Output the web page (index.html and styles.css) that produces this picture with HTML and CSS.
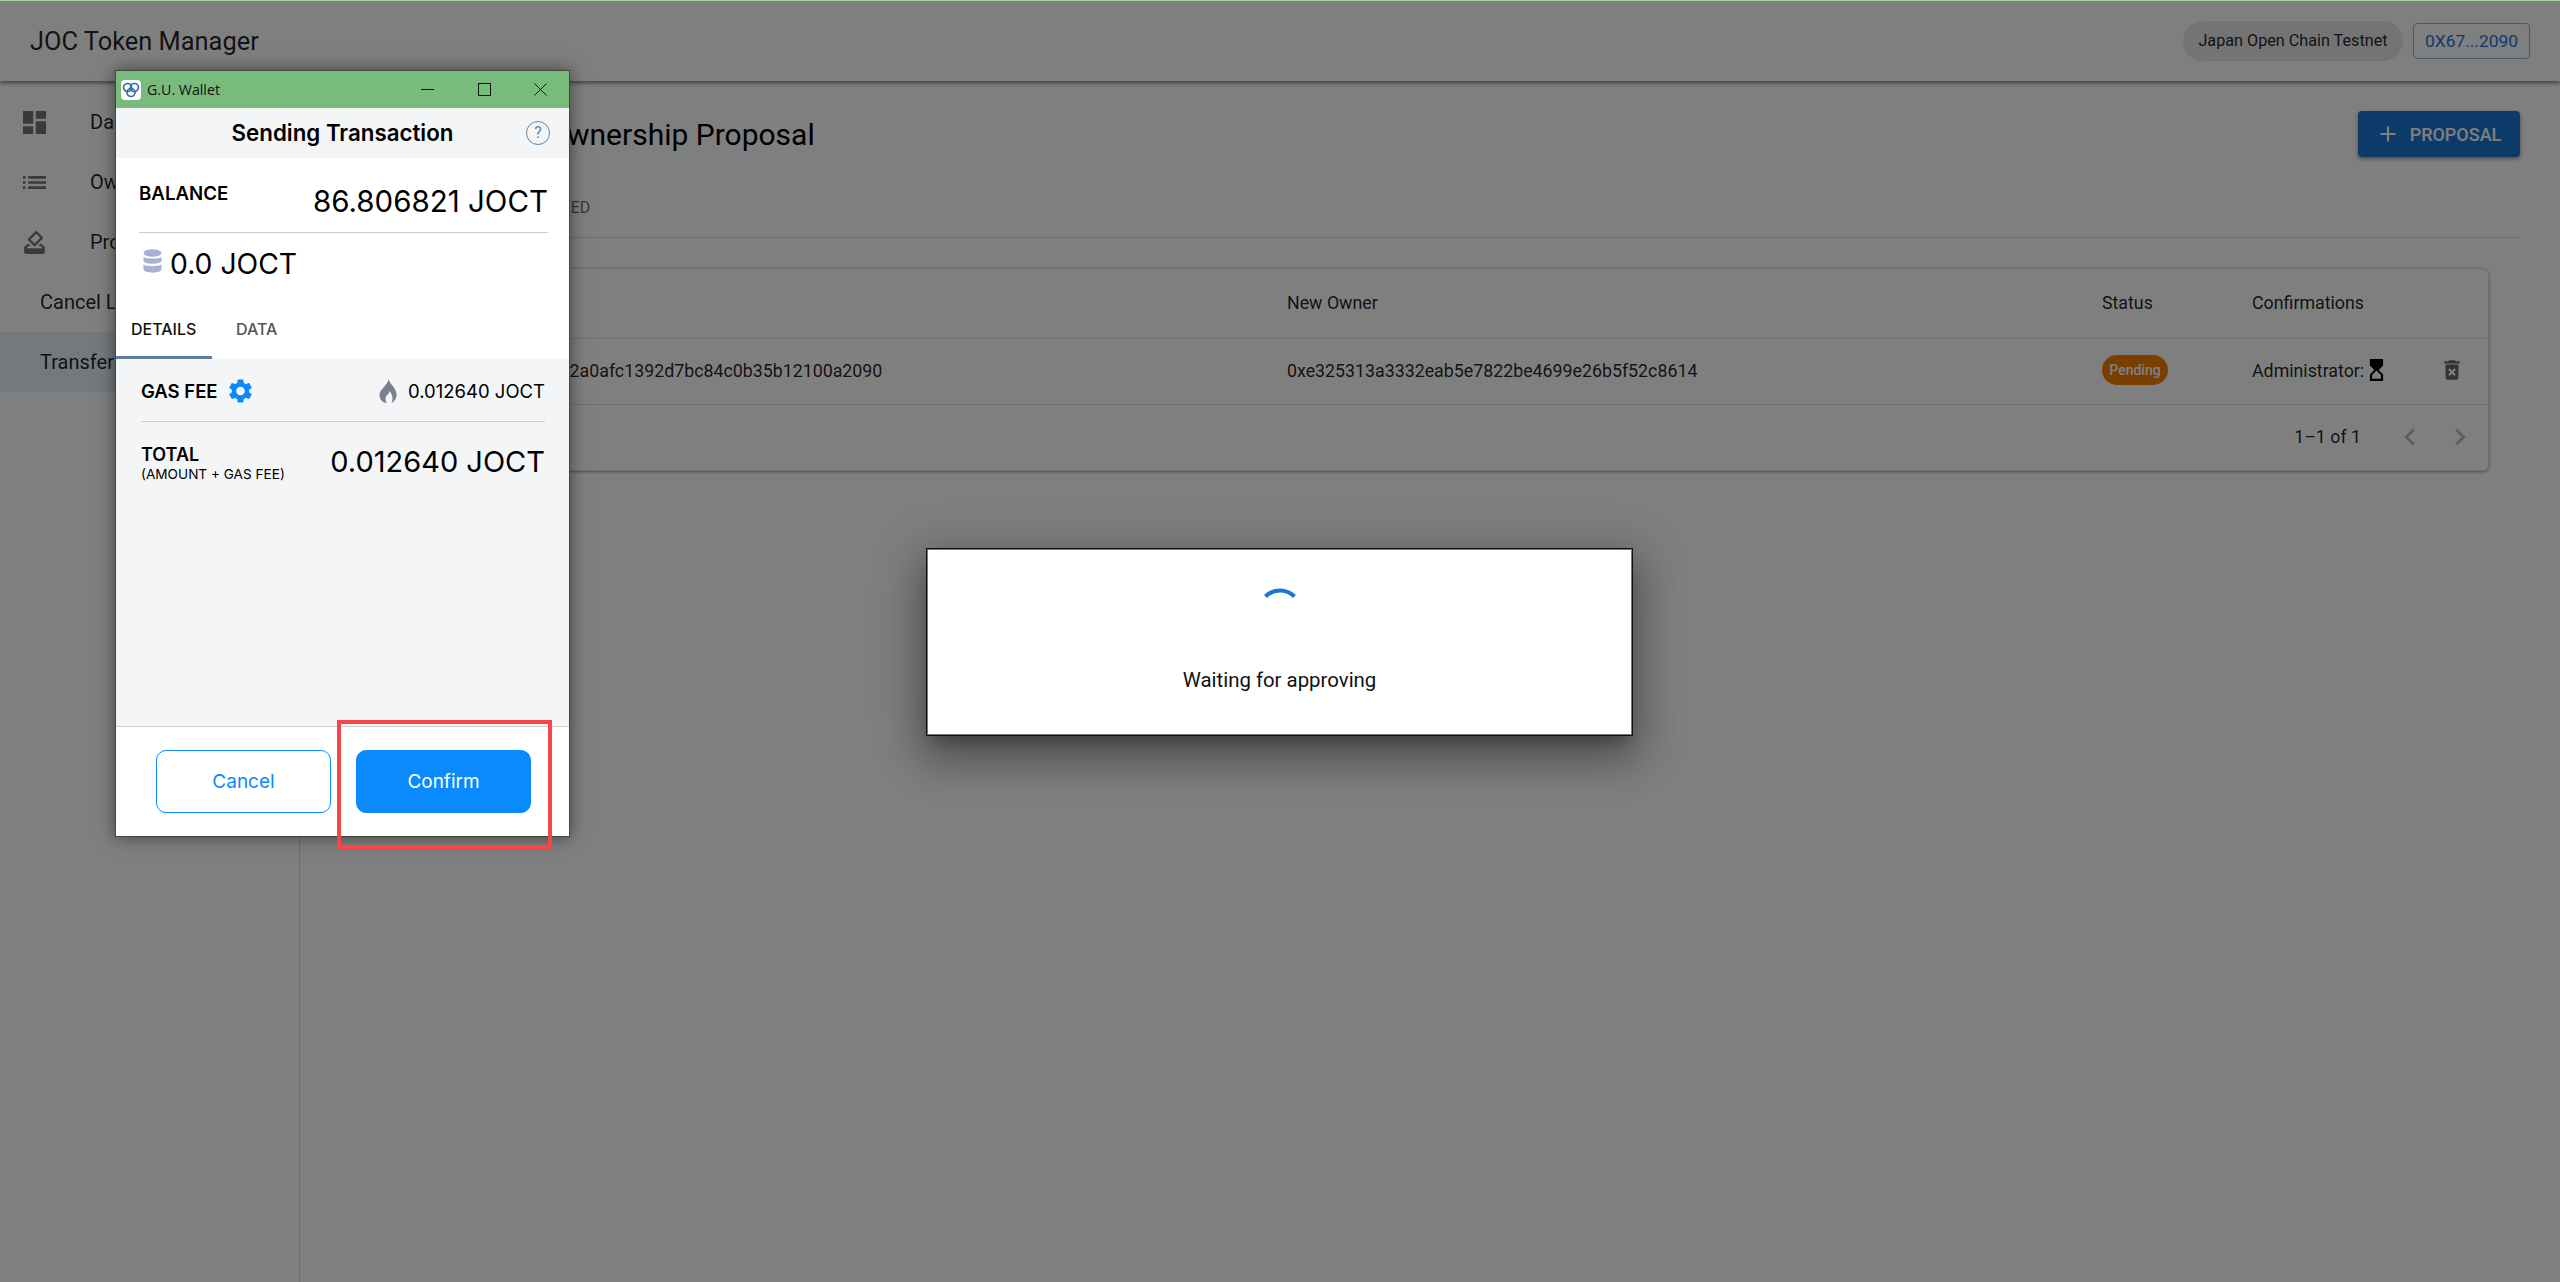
FILE: index.html
```html
<!DOCTYPE html>
<html lang="en">
<head>
<meta charset="utf-8">
<title>JOC Token Manager</title>
<link rel="stylesheet" href="styles.css">
</head>
<body>
<div class="app">
  <header class="appbar">
    <div class="brand">JOC Token Manager</div>
    <div class="appbar-right">
      <span class="network">Japan Open Chain Testnet</span>
      <span class="account">0X67...2090</span>
    </div>
  </header>
  <div class="layout">
    <nav class="sidebar">
      <div class="nav-item"><svg class="nav-icon" viewBox="3 3 18 18"><path d="M3 13h8V3H3v10zm0 8h8v-6H3v6zm10 0h8V11h-8v10zm0-18v6h8V3h-8z"/></svg><span>Dashboard</span></div>
      <div class="nav-item"><svg class="nav-icon" viewBox="3 3 18 18"><path d="M3 13h2v-2H3v2zm0 4h2v-2H3v2zm0-8h2V7H3v2zm4 4h14v-2H7v2zm0 4h14v-2H7v2zM7 7v2h14V7H7z"/></svg><span>Owners</span></div>
      <div class="nav-item"><svg class="nav-icon" viewBox="3 2 18 20"><path d="M18 13h-.68l-2 2h1.91L19 17H5l1.78-2h2.05l-2-2H6l-3 3v4c0 1.1.89 2 1.99 2H19c1.1 0 2-.89 2-2v-4l-3-3zm-1-5.05l-4.95 4.95-3.54-3.54 4.95-4.95L17 7.95zm-4.24-5.66L6.39 8.66c-.39.39-.39 1.02 0 1.41l4.95 4.95c.39.39 1.02.39 1.41 0l6.36-6.36c.39-.39.39-1.02 0-1.41L14.16 2.3c-.38-.4-1.01-.4-1.4-.01z"/></svg><span>Proposals</span></div>
      <div class="nav-item sub">Cancel Lock</div>
      <div class="nav-item sub selected">Transfer Ownership</div>
    </nav>
    <main class="main">
      <div class="page-head">
        <h1 class="page-title">Transfer Ownership Proposal</h1>
        <button class="add-btn"><svg class="add-icon" viewBox="0 0 24 24"><path d="M19 13h-6v6h-2v-6H5v-2h6V5h2v6h6v2z"/></svg>PROPOSAL</button>
      </div>
      <div class="tabs"><span class="tab">PENDING</span><span class="tab">FINISHED</span></div>
      <section class="card">
        <table class="table">
          <thead>
            <tr><th class="c-id"></th><th class="c-addr">Old Owner</th><th class="c-addr">New Owner</th><th class="c-status">Status</th><th class="c-conf">Confirmations</th><th></th></tr>
          </thead>
          <tbody>
            <tr>
              <td></td>
              <td>0x67c4d1e92a0afc1392d7bc84c0b35b12100a2090</td>
              <td>0xe325313a3332eab5e7822be4699e26b5f52c8614</td>
              <td><span class="pending">Pending</span></td>
              <td><span class="conf">Administrator: <svg class="hourglass" viewBox="6 2 12 20"><path d="M6 2l.01 6L10 12l-3.99 4.01L6 22h12v-6l-4-4 4-3.99V2H6zm10 14.5V20H8v-3.51l4-4 4 4.01z"/></svg></span></td>
              <td><svg class="trash" viewBox="0 0 24 24"><path d="M6 19c0 1.1.9 2 2 2h8c1.1 0 2-.9 2-2V7H6v12zm2.46-7.12l1.41-1.41L12 12.59l2.12-2.12 1.41 1.41L13.41 14l2.12 2.12-1.41 1.41L12 15.41l-2.12 2.12-1.41-1.41L10.59 14l-2.13-2.12zM15.5 4l-1-1h-5l-1 1H5v2h14V4z"/></svg></td>
            </tr>
          </tbody>
        </table>
        <div class="pager">
          <span class="pager-text">1–1 of 1</span>
          <svg class="chev" viewBox="0 0 24 24"><path d="M15.41 7.41 14 6l-6 6 6 6 1.41-1.41L10.83 12z"/></svg>
          <svg class="chev" viewBox="0 0 24 24"><path d="M10 6 8.59 7.41 13.17 12l-4.58 4.59L10 18l6-6z"/></svg>
        </div>
      </section>
    </main>
  </div>
  <div class="scrim"></div>
  <div class="topline"></div>

  <div class="modal">
    <svg class="spinner" viewBox="0 0 48 48"><path d="M9.500 10.500 A20.500 20.500 0 0 1 38.500 10.500" fill="none" stroke="#1976d2" stroke-width="4.200"/></svg>
    <div class="modal-text">Waiting for approving</div>
  </div>

  <div class="wallet">
    <div class="titlebar">
      <span class="logo"><svg viewBox="0 0 20 20"><g fill="none" stroke="#3a6ea5" stroke-width="1.700"><circle cx="6.600" cy="7.500" r="4"/><circle cx="13.400" cy="7.500" r="4"/><circle cx="10" cy="12.500" r="4"/></g></svg></span>
      <span class="wallet-name">G.U. Wallet</span>
      <span class="win-controls">
        <svg class="win-btn" viewBox="0 0 13 13"><path d="M0 6.500h13" stroke="#111" fill="none"/></svg>
        <svg class="win-btn" viewBox="0 0 13 13"><rect x=".5" y=".5" width="12" height="12" stroke="#111" fill="none"/></svg>
        <svg class="win-btn" viewBox="0 0 13 13"><path d="M.5.5l12 12M12.500.5l-12 12" stroke="#111" fill="none"/></svg>
      </span>
    </div>
    <div class="wallet-head">
      <span class="wallet-title">Sending Transaction</span>
      <span class="help">?</span>
    </div>
    <div class="summary">
      <div class="balance-row"><span class="balance-label">BALANCE</span><span class="amount">86.806821 JOCT</span></div>
      <div class="value-row">
        <svg class="db" viewBox="0 0 20 26"><g fill="#a8b1d4"><ellipse cx="10" cy="4" rx="9.500" ry="4"/><path d="M.5 8c2 2.600 17 2.600 19 0v4c0 4.600-19 4.600-19 0z"/><path d="M.5 16c2 2.600 17 2.600 19 0v5c0 5-19 5-19 0z"/></g></svg>
        <span class="amount small">0.0 JOCT</span>
      </div>
      <div class="wallet-tabs"><span class="wtab active">DETAILS</span><span class="wtab">DATA</span></div>
    </div>
    <div class="details">
      <div class="fee-row">
        <span class="fee-label">GAS FEE</span>
        <svg class="gear" viewBox="2.500 2 19 20"><path d="M19.14 12.94c.04-.3.06-.61.06-.94 0-.32-.02-.64-.07-.94l2.03-1.58a.49.49 0 0 0 .12-.61l-1.92-3.32a.488.488 0 0 0-.59-.22l-2.39.96c-.5-.38-1.03-.7-1.62-.94l-.36-2.54a.484.484 0 0 0-.48-.41h-3.84c-.24 0-.43.17-.47.41l-.36 2.54c-.59.24-1.13.57-1.62.94l-2.39-.96c-.22-.08-.47 0-.59.22L2.74 8.87c-.12.21-.08.47.12.61l2.03 1.58c-.05.3-.09.63-.09.94s.02.64.07.94l-2.03 1.58a.49.49 0 0 0-.12.61l1.92 3.32c.12.22.37.29.59.22l2.39-.96c.5.38 1.03.7 1.62.94l.36 2.54c.05.24.24.41.48.41h3.84c.24 0 .44-.17.47-.41l.36-2.54c.59-.24 1.13-.56 1.62-.94l2.39.96c.22.08.47 0 .59-.22l1.92-3.32c.12-.22.07-.47-.12-.61l-2.01-1.58zM12 15.600c-1.98 0-3.600-1.62-3.600-3.600s1.62-3.600 3.600-3.600 3.600 1.62 3.600 3.600-1.62 3.600-3.600 3.600z"/></svg>
        <span class="fee-value">
          <svg class="flame" viewBox="0 0 18 24"><path d="M9.500 0C10 4 16.500 8 17.500 14.500 18 19.500 15 23 12.500 24 14.500 20 13.500 15.500 10.500 12 10.300 15 8 15.500 7 17.500 6 19.500 6.500 22 8 24 4 24 .5 20.500.5 16 .5 10 8.500 7 9.500 0z"/></svg>
          0.012640 JOCT
        </span>
      </div>
      <div class="total-row">
        <div><div class="total-label">TOTAL</div><div class="total-sub">(AMOUNT + GAS FEE)</div></div>
        <span class="amount total">0.012640 JOCT</span>
      </div>
    </div>
    <div class="wallet-foot">
      <button class="btn btn-cancel">Cancel</button>
      <button class="btn btn-confirm">Confirm</button>
    </div>
  </div>

  <div class="highlight"></div>
</div>
</body>
</html>
```

FILE: styles.css
```css
* { box-sizing: border-box; }
html, body { margin: 0; padding: 0; }
body { font-family: Roboto, "Liberation Sans", sans-serif; color: rgba(0,0,0,.87); background: #fff; }
.app { position: relative; width: 2560px; height: 1282px; overflow: hidden; background: #fff; }

.appbar { height: 81px; display: flex; align-items: center; justify-content: space-between; padding: 0 30px 0 30px; background: #fff; box-shadow: 0 2px 4px rgba(0,0,0,.5); position: relative; }
.brand { font-size: 25.400px; }
.appbar-right { display: flex; align-items: center; gap: 10px; }
.network { height: 40px; width: 220px; border-radius: 20px; background: #e8e8e8; font-size: 16.200px; display: flex; align-items: center; justify-content: center; }
.account { height: 36px; width: 117px; border: 1px solid #90b4dc; border-radius: 4px; color: #1976d2; font-size: 17.400px; display: flex; align-items: center; justify-content: center; }

.layout { display: flex; height: 1201px; }
.sidebar { width: 300px; border-right: 1px solid #ddd; padding-top: 11px; flex: none; }
.nav-item { height: 60px; display: flex; align-items: center; padding-left: 23px; font-size: 20px; white-space: nowrap; }
.nav-item.sub { padding-left: 40px; }
.nav-item.selected { background: #e6f2fa; }
.nav-icon { width: 23px; height: 23px; margin-right: 44px; fill: rgba(0,0,0,.54); flex: none; }

.main { flex: 1; padding: 30px 40px 0 32px; min-width: 0; }
.page-head { display: flex; align-items: center; justify-content: space-between; height: 46px; }
.page-title { margin: 0 0 0 96px; font-size: 30px; font-weight: 400; color: #000; }
.add-btn { width: 162px; height: 46px; border: 0; border-radius: 4px; background: #1976d2; color: #fff; font: 500 18px Roboto, sans-serif; display: flex; align-items: center; justify-content: center; gap: 9px; box-shadow: 0 2px 4px rgba(0,0,0,.4); padding: 0 2px 0 0; }
.add-icon { width: 26px; height: 26px; fill: #fff; }
.tabs { height: 81px; border-bottom: 1px solid #ddd; display: flex; gap: 91px; padding: 41px 0 0 30px; font-size: 16px; color: rgba(0,0,0,.6); }
.card { margin: 30px 31px 0 0; border: 1px solid #e0e0e0; border-radius: 6px; box-shadow: 0 1px 3px rgba(0,0,0,.4); height: 203px; }
.table { width: 100%; border-collapse: collapse; table-layout: fixed; }
.table th { height: 69px; font-weight: 400; text-align: left; padding: 0 0 2px; border-bottom: 1px solid #e0e0e0; font-size: 17.800px; }
.table td { height: 66px; padding: 0 0 2px; border-bottom: 1px solid #e0e0e0; font-size: 17.800px; }
.c-id { width: 139px; }
.c-addr { width: 815px; }
.c-status { width: 150px; }
.c-conf { width: 179px; }
.pending { display: inline-flex; align-items: center; justify-content: center; width: 66px; height: 30px; border-radius: 15px; background: #f57c00; color: #fff; font-size: 14px; font-weight: 500; }
.conf { display: inline-flex; align-items: center; gap: 5px; }
.hourglass { width: 15px; height: 22px; fill: #000; }
.trash { width: 26px; height: 26px; fill: rgba(0,0,0,.6); display: block; margin-left: 8px; }
.pager { display: flex; align-items: center; justify-content: flex-end; height: 64px; padding-right: 11px; }
.pager-text { font-size: 17.800px; margin-right: 32px; }
.chev { width: 34px; height: 34px; fill: rgba(0,0,0,.26); margin-left: 16px; }
.chev:first-of-type { margin-left: 0; }

.scrim { position: absolute; inset: 0; background: rgba(0,0,0,.5); }
.topline { position: absolute; left: 0; right: 0; top: 0; height: 1px; background: #a9cfa6; }

.modal { position: absolute; left: 926px; top: 548px; width: 707px; height: 188px; background: #fff; border: 1px solid #111; box-shadow: inset 0 0 0 1px #777, 0 11px 15px -7px rgba(0,0,0,.3), 0 24px 38px 3px rgba(0,0,0,.22), 0 9px 46px 8px rgba(0,0,0,.2); display: flex; flex-direction: column; align-items: center; padding-top: 37px; }
.spinner { width: 48px; height: 48px; flex: none; }
.modal-text { margin-top: 34px; font-size: 20.400px; color: #111; }

.wallet { position: absolute; left: 115px; top: 70px; width: 455px; height: 767px; background: #fff; border: 1px solid #3d4a3d; box-shadow: 0 0 16px rgba(0,0,0,.5); display: flex; flex-direction: column; font-family: Inter, "Liberation Sans", sans-serif; color: #000; }
.titlebar { height: 37px; background: #79bb7c; display: flex; align-items: center; padding-left: 5px; flex: none; }
.logo { width: 20px; height: 20px; background: #fff; border-radius: 4px; display: block; }
.logo svg { display: block; width: 20px; height: 20px; }
.wallet-name { margin-left: 6px; font: 14.200px "Open Sans", sans-serif; color: #111; }
.win-controls { margin-left: auto; display: flex; gap: 43.500px; padding-right: 22px; }
.win-btn { width: 13px; height: 13px; display: block; }
.wallet-head { height: 50px; background: #f4f5f7; position: relative; display: flex; align-items: center; justify-content: center; flex: none; }
.wallet-title { font-size: 22.300px; font-weight: 600; margin-top: -1px; }
.help { position: absolute; right: 19px; top: 13px; width: 24px; height: 24px; border: 1.500px solid #5b86a8; border-radius: 50%; color: #5b86a8; font: 16px/21px Roboto, sans-serif; text-align: center; }
.summary { height: 201px; padding: 0 21px 0 23px; position: relative; flex: none; }
.balance-row { height: 75px; border-bottom: 1px solid #ccc; display: flex; justify-content: space-between; padding-top: 25px; }
.balance-label { font-size: 18.700px; font-weight: 600; line-height: 22px; }
.amount { font-size: 29.500px; line-height: 38px; white-space: nowrap; }
.balance-row .amount { margin-top: -1px; }
.amount.small { font-size: 28.300px; margin-top: 2px; }
.amount.total { font-size: 29px; margin-top: -1px; }
.value-row { display: flex; align-items: center; gap: 8px; height: 60px; padding-left: 4px; }
.db { width: 19px; height: 25px; flex: none; margin-top: -4px; }
.wallet-tabs { position: absolute; left: 0; bottom: 0; display: flex; font-size: 16px; }
.wtab { height: 40px; padding: 0 14px; color: #555; font-weight: 500; line-height: 20px; }
.wtab.active { width: 96px; color: #111; border-bottom: 3px solid #607d9c; padding-left: 15px; }
.wtab:last-child { margin-left: 10px; }
.details { flex: 1; background: #f4f5f7; border-bottom: 1px solid #ccc; padding: 0 24px 0 25px; }
.fee-row { height: 63px; border-bottom: 1px solid #ccc; display: flex; align-items: center; padding-top: 1px; }
.fee-label { font-size: 18.500px; font-weight: 600; }
.gear { width: 23px; height: 24px; fill: #0a8afc; margin-left: 11px; }
.fee-value { margin-left: auto; display: flex; align-items: center; gap: 11px; font-size: 18.500px; }
.flame { width: 18px; height: 24px; fill: #7b7f90; }
.total-row { display: flex; justify-content: space-between; padding-top: 22px; }
.total-label { font-size: 18px; font-weight: 600; line-height: 21px; }
.total-sub { font-size: 13.600px; line-height: 19px; }
.wallet-foot { height: 109px; display: flex; justify-content: center; gap: 25px; padding-top: 23px; flex: none; margin-left: 2px; }
.btn { width: 175px; height: 63px; border-radius: 10px; font: 19px Inter, sans-serif; }
.btn-cancel { background: #fff; border: 1px solid #0a8afc; color: #0a8afc; }
.btn-confirm { background: #0a8afc; border: 1px solid #0a8afc; color: #fff; }

.highlight { position: absolute; left: 337px; top: 720px; width: 215px; height: 129px; border: 4px solid #f74548; }
```
